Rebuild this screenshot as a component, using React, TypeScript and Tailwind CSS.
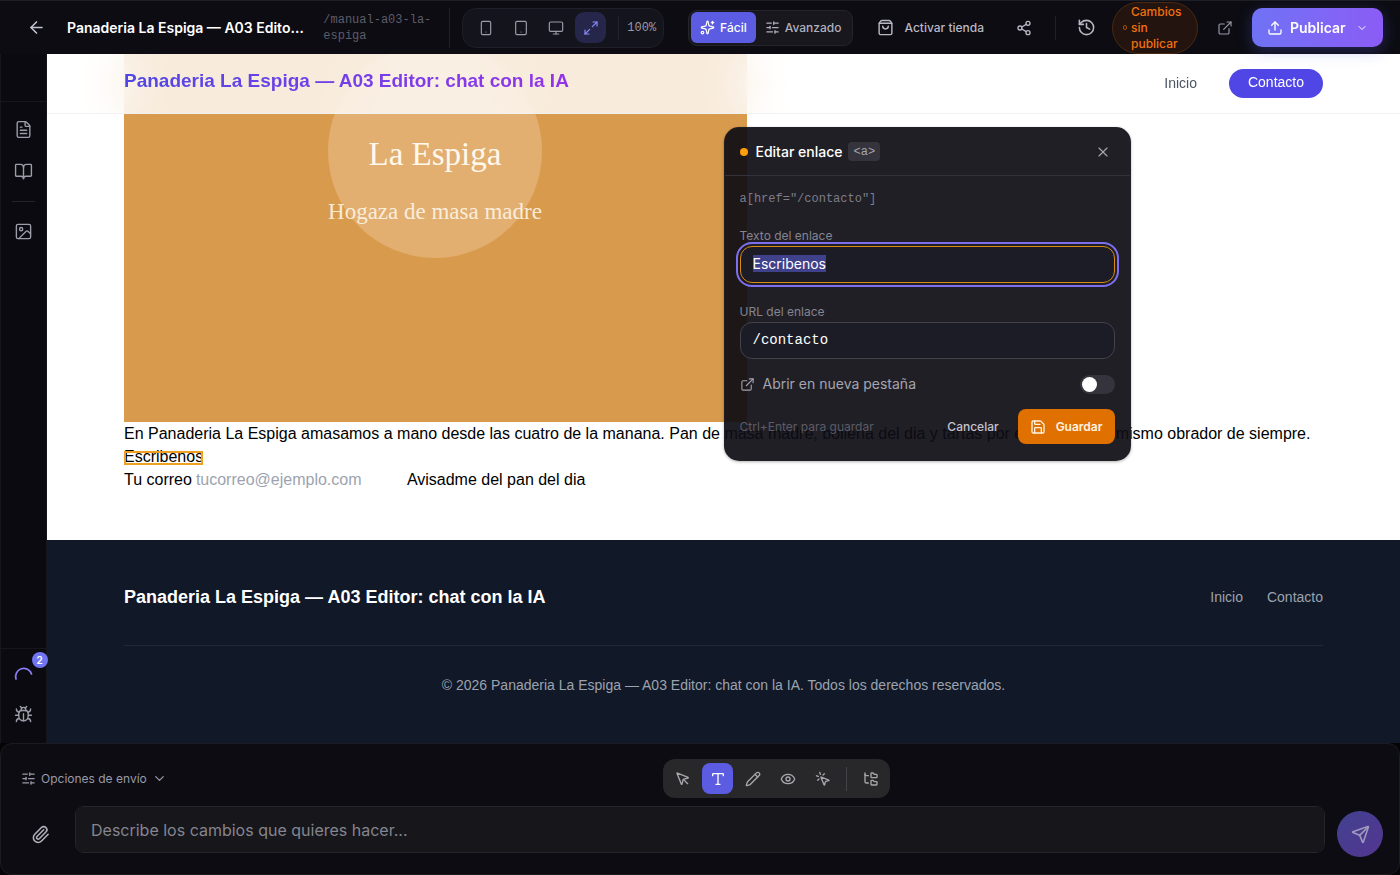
import React, { useEffect, useRef, useState } from 'react'
import clsx from 'clsx'
import {
  ArrowLeft,
  BookOpen,
  Bug,
  ChevronDown,
  ExternalLink,
  Eye,
  FileText,
  FolderTree,
  History,
  Image as ImageIcon,
  Maximize2,
  Monitor,
  MousePointer,
  MousePointerClick,
  Paperclip,
  Pencil,
  Save,
  Send,
  Share2,
  ShoppingBag,
  SlidersHorizontal,
  Smartphone,
  Sparkles,
  Tablet,
  Type,
  Upload,
  X,
} from 'lucide-react'

const SITE_NAME = 'Panaderia La Espiga — A03 Editor: chat con la IA'

const devices = [
  { label: 'Móvil', Icon: Smartphone },
  { label: 'Tablet', Icon: Tablet },
  { label: 'Escritorio', Icon: Monitor },
  { label: 'Ancho completo', Icon: Maximize2 },
]

const tools = [
  { label: 'Seleccionar', Icon: MousePointer },
  { label: 'Texto', Icon: Type },
  { label: 'Dibujar', Icon: Pencil },
  { label: 'Vista previa', Icon: Eye },
  { label: 'Interactuar', Icon: MousePointerClick },
]

function TopBar() {
  const [device, setDevice] = useState(3)

  return (
    <header className="relative z-20 flex h-[54px] shrink-0 items-center border-t border-[#1e1e26] bg-[#0c0c12] pr-[17px]">
      <div className="flex min-w-0 flex-1 items-center pl-5">
        <button aria-label="Volver" className="flex size-8 shrink-0 items-center justify-center text-[#c4c4d0]">
          <ArrowLeft size={19} />
        </button>
        <h1 className="ml-[15px] min-w-0 flex-1 truncate text-[14px] font-semibold text-white">{SITE_NAME}</h1>
        <span className="ml-4 w-28 shrink-0 font-['Liberation_Mono',monospace] text-[12px] leading-4 text-[#5c5c6b]">
          /manual-a03-la-espiga
        </span>
      </div>
      <div className="ml-3.5 h-10 w-px bg-[#1f1f28]" />

      <div className="ml-3 flex h-10 items-center rounded-[14px] border border-[#1f1f2a] bg-[#14141c] px-[7px]">
        <div className="flex gap-1">
          {devices.map(({ label, Icon }, i) => (
            <button
              key={label}
              aria-label={label}
              onClick={() => setDevice(i)}
              className={clsx(
                'flex size-[31px] items-center justify-center rounded-[9px]',
                i === device ? 'bg-[#26264b] text-[#8b8df8]' : 'text-[#9a9aa8]',
              )}
            >
              <Icon size={16} strokeWidth={1.75} />
            </button>
          ))}
        </div>
        <div className="ml-3 h-6 w-px bg-[#23232e]" />
        <span className="ml-2 font-['Liberation_Mono',monospace] text-[12px] text-[#9a9aa8]">100%</span>
      </div>

      <div className="ml-6 flex h-9 items-center rounded-[9px] border border-[#24242c] bg-[#17171d] px-0.5 text-[12px] font-medium">
        <button className="flex h-[31px] items-center gap-[5px] rounded-md bg-[#5b5ce2] px-[9px] text-white">
          <Sparkles size={15} />
          Fácil
        </button>
        <button className="flex h-[31px] items-center gap-[5px] px-[9px] text-[#b0b0bd]">
          <SlidersHorizontal size={15} />
          Avanzado
        </button>
      </div>

      <button className="ml-3.5 flex h-8 items-center gap-2.5 pr-3 pl-2.5 text-[12px] font-medium whitespace-nowrap text-[#b8b8c4]">
        <ShoppingBag size={17} />
        Activar tienda
      </button>
      <button aria-label="Compartir" className="ml-3 flex size-8 items-center justify-center text-[#b8b8c4]">
        <Share2 size={16} />
      </button>
      <div className="ml-[15px] h-6 w-px bg-[#1f1f28]" />
      <button aria-label="Historial" className="ml-3.5 flex size-8 items-center justify-center text-[#b8b8c4]">
        <History size={19} />
      </button>
      <div className="ml-2.5 flex w-[86px] items-center gap-1 rounded-full border border-[#4a2812] bg-[#231410] py-px pl-2.5 text-[12px] leading-4 font-medium text-[#f0700f]">
        <span className="h-[5px] w-1 shrink-0 rounded-full border border-[#a34e0c]" />
        <span className="flex-1">Cambios sin publicar</span>
      </div>
      <button aria-label="Abrir sitio" className="ml-[11px] flex size-8 items-center justify-center text-[#9a9aa8]">
        <ExternalLink size={16} strokeWidth={1.75} />
      </button>
      <button className="ml-[11px] flex h-[39px] w-[131px] items-center rounded-[10px] bg-linear-to-r from-[#6f72f5] to-[#8b5cf6] pl-[15px] text-[14px] font-semibold text-white shadow-[0_4px_16px_rgba(99,102,241,0.3)]">
        <Upload size={16} />
        <span className="ml-[7px]">Publicar</span>
        <ChevronDown size={12} className="ml-2.5" />
      </button>
    </header>
  )
}

function SideBar() {
  return (
    <aside className="relative z-10 flex w-[47px] shrink-0 flex-col border-x border-[#16161d] bg-[#0a0a10] text-[#9d9daa]">
      <div className="h-12 border-b border-[#16161d]" />
      <div className="flex flex-1 flex-col items-center pt-[11px]">
        <button aria-label="Páginas" className="flex size-8 items-center justify-center">
          <FileText size={19} strokeWidth={1.75} />
        </button>
        <button aria-label="Guía" className="mt-2.5 flex size-8 items-center justify-center">
          <BookOpen size={19} strokeWidth={1.75} />
        </button>
        <div className="mt-3.5 h-px w-[23px] bg-[#23232c]" />
        <button aria-label="Imágenes" className="mt-[13px] flex size-8 items-center justify-center">
          <ImageIcon size={19} strokeWidth={1.75} />
        </button>
      </div>
      <div className="flex h-[95px] flex-col items-center gap-1.5 border-t border-[#16161d] pt-[11px]">
        <button aria-label="Tareas en curso" className="relative flex size-8 items-center justify-center">
          <svg width="20" height="20" viewBox="0 0 20 20" fill="none">
            <path d="M2 13A8 8 0 0 1 17.5 8" stroke="#8b7cf6" strokeWidth="1.75" strokeLinecap="round" />
          </svg>
          <span className="absolute -top-2 -right-2 flex size-4 items-center justify-center rounded-full bg-[#7175f3] text-[10px] font-semibold text-white">
            2
          </span>
        </button>
        <button aria-label="Reportar error" className="flex size-8 items-center justify-center">
          <Bug size={19} strokeWidth={1.75} />
        </button>
      </div>
    </aside>
  )
}

function SitePreview() {
  return (
    <div className="flex h-full flex-col overflow-hidden bg-white font-['Liberation_Sans',Arial,sans-serif] text-[16px] leading-[23px] text-black">
      <nav className="absolute inset-x-0 top-0 z-10 flex h-[60px] items-center justify-between border-b border-[#f1f1f4] bg-white/80 px-[77px] backdrop-blur-xl">
        <a
          href="#"
          className="bg-linear-to-r from-[#4f46e5] to-[#9333ea] bg-clip-text pb-1.5 text-[19px] font-bold text-transparent"
        >
          {SITE_NAME}
        </a>
        <div className="flex items-center gap-8 text-[14px]">
          <a href="#" className="text-[#4b5563]">
            Inicio
          </a>
          <a href="#" className="rounded-full bg-[#4f46e5] px-[19px] pt-0.5 pb-1 text-white">
            Contacto
          </a>
        </div>
      </nav>

      <section className="shrink-0 px-[77px] pb-[49px]">
        <svg width="623" height="368" viewBox="0 0 623 368" role="img" aria-label="Hogaza de masa madre" className="block">
          <rect width="623" height="368" fill="#d89b4d" />
          <circle cx="311" cy="97" r="107" fill="#e2af70" />
          <g fill="#fff8ec" textAnchor="middle" fontFamily="Liberation Serif, serif">
            <text x="311" y="111" fontSize="33">
              La Espiga
            </text>
            <text x="311" y="165" fontSize="23" opacity="0.85">
              Hogaza de masa madre
            </text>
          </g>
        </svg>
        <p className="whitespace-nowrap">
          En Panaderia La Espiga amasamos a mano desde las cuatro de la manana. Pan de masa madre, bolleria del dia y
          tartas por encargo en el mismo obrador de siempre.
        </p>
        <p>
          <a href="#" className="relative">
            Escribenos
            <span className="absolute inset-x-0 top-[3px] bottom-0 border-2 border-[#f0a020]" />
          </a>
        </p>
        <form className="flex" onSubmit={e => e.preventDefault()}>
          <label htmlFor="correo">Tu correo</label>
          <input
            id="correo"
            type="email"
            placeholder="tucorreo@ejemplo.com"
            className="ml-1 h-[23px] w-[211px] placeholder:text-[#9ca3af]"
          />
          <button>Avisadme del pan del dia</button>
        </form>
      </section>

      <footer className="flex-1 bg-[#111827] px-[77px] pt-[46px] text-[14px] text-[#9ca3af]">
        <div className="flex items-center justify-between border-b border-[#1f2937] pb-9">
          <span className="text-[18px] font-bold text-white">{SITE_NAME}</span>
          <div className="flex gap-6">
            <a href="#">Inicio</a>
            <a href="#">Contacto</a>
          </div>
        </div>
        <p className="mt-7 text-center">© 2026 {SITE_NAME}. Todos los derechos reservados.</p>
      </footer>
    </div>
  )
}

function LinkDialog() {
  const textRef = useRef<HTMLInputElement>(null)

  useEffect(() => {
    textRef.current?.focus()
    textRef.current?.select()
  }, [])

  return (
    <div
      role="dialog"
      aria-labelledby="dialog-title"
      className="absolute top-[73px] left-1/2 z-20 w-[407px] rounded-[15px] border border-[#24232a]/60 bg-[#0d0c13]/92 text-[12px] shadow-[0_1px_3px_rgba(0,0,0,0.3)]"
    >
      <div className="flex h-12 items-center border-b border-[#33323a] px-[15px]">
        <span className="size-2 rounded-full bg-[#ff9f0a]" />
        <h2 id="dialog-title" className="ml-2 text-[14px] font-medium text-white">
          Editar enlace
        </h2>
        <code className="ml-1.5 flex h-[19px] items-center rounded bg-[#35343c] px-[5px] font-['Liberation_Mono',monospace] text-[12px] text-[#a5a4b0]">
          &lt;a&gt;
        </code>
        <button aria-label="Cerrar" className="ml-auto flex size-6 items-center justify-center text-[#a5a4b0]">
          <X size={16} strokeWidth={1.75} />
        </button>
      </div>

      <div className="flex flex-col px-[15px] pt-[15px] pb-4">
        <code className="font-['Liberation_Mono',monospace] text-[12px] leading-4 text-[#7e7d8a]">
          a[href="/contacto"]
        </code>
        <label htmlFor="texto" className="mt-[21px] leading-4 text-[#85848f]">
          Texto del enlace
        </label>
        <input
          id="texto"
          ref={textRef}
          defaultValue="Escribenos"
          className="mt-0.5 h-[37px] rounded-xl border border-[#d98a14] bg-[#1b1c25] px-3 pb-0.5 text-[14px] text-white outline-2 outline-offset-2 outline-[#7c70f0] selection:bg-[#6366f1]/50 selection:text-white"
        />
        <label htmlFor="url" className="mt-[21px] leading-4 text-[#85848f]">
          URL del enlace
        </label>
        <input
          id="url"
          defaultValue="/contacto"
          className="mt-0.5 h-[37px] rounded-xl border border-[#43424b] bg-[#1b1c25] px-3 pb-0.5 font-['Liberation_Mono',monospace] text-[14px] text-white"
        />
        <div className="mt-[15px] flex items-center text-[14px] text-[#a5a4b0]">
          <ExternalLink size={15} strokeWidth={1.75} />
          <label htmlFor="pestana" className="ml-2 leading-5">
            Abrir en nueva pestaña
          </label>
          <input
            id="pestana"
            type="checkbox"
            role="switch"
            className="ml-auto h-[19px] w-[35px] appearance-none rounded-full bg-[#35343c] p-0.5 before:block before:size-[15px] before:rounded-full before:bg-white checked:bg-[#e07000] checked:before:ml-4"
          />
        </div>
        <div className="mt-[15px] flex items-center">
          <span className="text-[#5c5b66]">Ctrl+Enter para guardar</span>
          <button className="ml-auto px-[19px] font-medium text-[#c4c3cf]">Cancelar</button>
          <button className="flex h-[35px] items-center gap-2.5 rounded-lg bg-[#e07000] px-3 font-semibold text-[#fff3e0]">
            <Save size={16} />
            Guardar
          </button>
        </div>
      </div>
    </div>
  )
}

function PromptPanel() {
  const [tool, setTool] = useState(1)

  return (
    <footer className="relative z-20 h-[132px] shrink-0 rounded-xl border border-[#1b1b22] bg-[#0c0c12] px-4 pt-[15px]">
      <div className="flex items-center">
        <button className="flex items-center gap-[5px] px-1 text-[12px] text-[#9a9aa8]">
          <SlidersHorizontal size={15} />
          Opciones de envío
          <ChevronDown size={15} />
        </button>
        <div className="flex flex-1 justify-center">
          <div className="flex h-[39px] items-center gap-1 rounded-xl bg-[#28282a] px-1">
            {tools.map(({ label, Icon }, i) => (
              <button
                key={label}
                aria-label={label}
                onClick={() => setTool(i)}
                className={clsx(
                  'flex size-[31px] items-center justify-center rounded-lg',
                  i === tool ? 'bg-[#5b5ce2] text-white' : 'text-[#a8a8ac]',
                )}
              >
                <Icon size={16} />
              </button>
            ))}
            <div className="mx-1 h-6 w-px bg-[#444448]" />
            <button aria-label="Árbol" className="flex size-[31px] items-center justify-center text-[#a8a8ac]">
              <FolderTree size={16} />
            </button>
          </div>
        </div>
      </div>

      <div className="mt-2 flex items-start">
        <button aria-label="Adjuntar" className="mt-[5px] flex size-[46px] items-center justify-center text-[#b0b0bb]">
          <Paperclip size={19} />
        </button>
        <textarea
          rows={1}
          aria-label="Describe los cambios"
          placeholder="Describe los cambios que quieres hacer..."
          className="ml-3 h-[47px] min-w-0 flex-1 resize-none rounded-[9px] border border-[#25252c] bg-[#16161b] px-[15px] py-[11px] text-[16px] leading-6 text-white placeholder:text-[#85858f]"
        />
        <button
          aria-label="Enviar"
          className="mt-[5px] ml-3 flex size-[46px] shrink-0 items-center justify-center rounded-full bg-linear-to-br from-[#41418f] to-[#533591] text-[#9f99bd]"
        >
          <Send size={19} />
        </button>
      </div>
    </footer>
  )
}

export default function App() {
  return (
    <div className="flex h-screen flex-col bg-[#050508] font-[Inter,sans-serif]">
      <TopBar />
      <div className="flex min-h-0 flex-1">
        <SideBar />
        <main className="relative min-w-0 flex-1">
          <SitePreview />
          <LinkDialog />
        </main>
      </div>
      <PromptPanel />
    </div>
  )
}
